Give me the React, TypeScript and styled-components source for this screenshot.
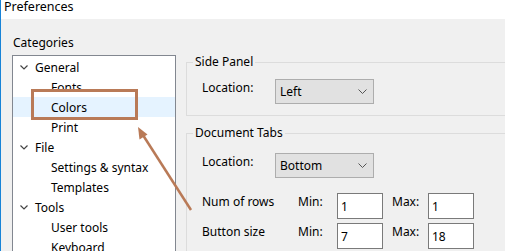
import React from "react";
import styled, { createGlobalStyle } from "styled-components";

const GlobalStyle = createGlobalStyle`
  html, body {
    margin: 0;
    padding: 0;
    background: #f0f0f0;
    overflow: hidden;
  }
  body {
    font-family: "Noto Sans", "Liberation Sans", sans-serif;
    font-size: 12px;
    color: #000;
  }
`;

const Window = styled.div`
  position: relative;
  width: 505px;
  height: 251px;
  box-sizing: border-box;
  border-left: 1px solid #1883d7;
  background: #f0f0f0;
  overflow: hidden;
`;

const TitleBar = styled.div`
  height: 19px;
  background: #fff;
  padding-left: 3px;
  line-height: 13px;
  font-size: 12.5px;
`;

const Body = styled.div`
  display: grid;
  grid-template-columns: 164px 1fr;
  column-gap: 10px;
  padding-left: 11px;
`;

const LeftColumn = styled.div`
  padding-top: 16px;
`;

const Caption = styled.div`
  line-height: 16px;
  margin-bottom: 4px;
  padding-left: 1px;
`;

const Tree = styled.div`
  border: 1px solid #828790;
  background: #fff;
  padding-top: 1px;
  height: 260px;
`;

const Row = styled.div<{ $child?: boolean; $selected?: boolean }>`
  height: 20px;
  display: flex;
  align-items: center;
  padding-left: ${(p) => (p.$child ? "38px" : "7px")};
  background: ${(p) => (p.$selected ? "#e5f3ff" : "transparent")};
`;

const Chevron = styled.svg`
  width: 8px;
  height: 5px;
  margin-right: 7px;
  flex: none;
`;

const RightColumn = styled.div`
  padding-top: 35px;
`;

const Group = styled.fieldset`
  margin: 0 0 9px 0;
  padding: 0;
  border: 1px solid #dcdcdc;
  width: 400px;
  min-width: 0;
`;

const Legend = styled.legend`
  margin-left: 6px;
  padding: 0 2px;
  line-height: 16px;
`;

const GroupInner = styled.div<{ $top: number; $bottom: number }>`
  padding: ${(p) => p.$top}px 0 ${(p) => p.$bottom}px 15px;
`;

const FieldRow = styled.div<{ $gap?: number }>`
  display: flex;
  align-items: flex-start;
  margin-top: ${(p) => p.$gap ?? 0}px;
`;

const Label = styled.span<{ $w: number }>`
  width: ${(p) => p.$w}px;
  flex: none;
  line-height: 16px;
  padding-top: 1px;
`;

const Select = styled.div`
  box-sizing: border-box;
  width: 99px;
  height: 25px;
  border: 1px solid #adadad;
  background: #e1e1e1;
  display: flex;
  align-items: center;
  justify-content: space-between;
  padding: 0 6px 0 4px;
`;

const Input = styled.div`
  box-sizing: border-box;
  width: 46px;
  height: 26px;
  border: 1px solid #7a7a7a;
  background: #fff;
  display: flex;
  align-items: center;
  padding-left: 3px;
  flex: none;
`;

const Spacer = styled.span<{ $w: number }>`
  width: ${(p) => p.$w}px;
  flex: none;
`;

const Highlight = styled.div`
  position: absolute;
  left: 30px;
  top: 89px;
  width: 107px;
  height: 31px;
  box-sizing: border-box;
  border: 3px solid #b97a57;
`;

const Overlay = styled.svg`
  position: absolute;
  left: 0;
  top: 0;
  width: 505px;
  height: 251px;
  pointer-events: none;
`;

const Down = () => (
  <Chevron viewBox="0 0 8 5">
    <polyline points="0.5,0.5 4,4 7.5,0.5" fill="none" stroke="#444" strokeWidth="1.2" />
  </Chevron>
);

const SelectArrow = () => (
  <svg width="9" height="5" viewBox="0 0 9 5">
    <polyline points="0.5,0.5 4.5,4.5 8.5,0.5" fill="none" stroke="#555" strokeWidth="1" />
  </svg>
);

const tree = [
  { label: "General", child: false },
  { label: "Fonts", child: true },
  { label: "Colors", child: true, selected: true },
  { label: "Print", child: true },
  { label: "File", child: false },
  { label: "Settings & syntax", child: true },
  { label: "Templates", child: true },
  { label: "Tools", child: false },
  { label: "User tools", child: true },
  { label: "Keyboard", child: true },
];

const App: React.FC = () => {
  return (
    <>
      <GlobalStyle />
      <Window>
        <TitleBar>Preferences</TitleBar>
        <Body>
          <LeftColumn>
            <Caption>Categories</Caption>
            <Tree>
              {tree.map((item) => (
                <Row key={item.label} $child={item.child} $selected={item.selected}>
                  {!item.child && <Down />}
                  {item.label}
                </Row>
              ))}
            </Tree>
          </LeftColumn>
          <RightColumn>
            <Group>
              <Legend>Side Panel</Legend>
              <GroupInner $top={9} $bottom={11}>
                <FieldRow>
                  <Label $w={73}>Location:</Label>
                  <Select>
                    Left
                    <SelectArrow />
                  </Select>
                </FieldRow>
              </GroupInner>
            </Group>
            <Group>
              <Legend>Document Tabs</Legend>
              <GroupInner $top={12} $bottom={20}>
                <FieldRow>
                  <Label $w={73}>Location:</Label>
                  <Select>
                    Bottom
                    <SelectArrow />
                  </Select>
                </FieldRow>
                <FieldRow $gap={15}>
                  <Label $w={96}>Num of rows</Label>
                  <Label $w={39}>Min:</Label>
                  <Input>1</Input>
                  <Spacer $w={9} />
                  <Label $w={36}>Max:</Label>
                  <Input>1</Input>
                </FieldRow>
                <FieldRow $gap={4}>
                  <Label $w={96}>Button size</Label>
                  <Label $w={39}>Min:</Label>
                  <Input>7</Input>
                  <Spacer $w={9} />
                  <Label $w={36}>Max:</Label>
                  <Input>18</Input>
                </FieldRow>
              </GroupInner>
            </Group>
          </RightColumn>
        </Body>
        <Highlight />
        <Overlay viewBox="0 0 505 251">
          <line x1="190" y1="210" x2="140" y2="132" stroke="#b97a57" strokeWidth="2.5" />
          <polygon points="137,127 146.5,134.5 138.5,139.5" fill="#b97a57" />
        </Overlay>
      </Window>
    </>
  );
};

export default App;
